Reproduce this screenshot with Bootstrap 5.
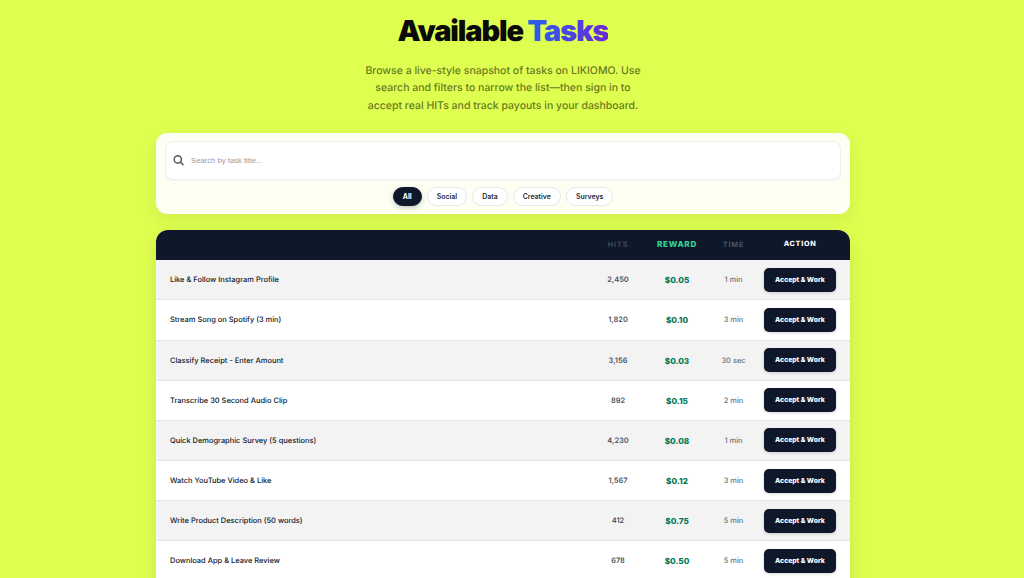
<!DOCTYPE html>
<html lang="en">
<head>
<meta charset="utf-8">
<meta name="viewport" content="width=device-width, initial-scale=1">
<title>Available Tasks</title>
<link href="https://cdn.jsdelivr.net/npm/bootstrap@5.3.0/dist/css/bootstrap.min.css" rel="stylesheet">
<style>
html, body { height: 100%; overflow: hidden; }
body { background: #deff4f; font-family: Inter, "Liberation Sans", sans-serif; color: #0f172a; padding-right: 18px; text-rendering: geometricPrecision; }
.page { width: 694px; }
.title { font-size: 29px; font-weight: 900; letter-spacing: -1.15px; line-height: 32px; color: #0a0a0a; padding-top: 15px; }
.title span { background: linear-gradient(90deg, #2563eb, #6d28d9); -webkit-background-clip: text; background-clip: text; color: transparent; }
.intro { font-size: 10.5px; font-weight: 500; line-height: 17.6px; color: #6b7a22; margin-top: 14.8px; }
.filters { height: 81px; margin-top: 18.7px; padding: 8px 9px; border-radius: 11px; background: #fdfff2; box-shadow: 0 7px 18px rgba(15,23,42,.07); }
.search { height: 39px; border: 1px solid #edeff0; border-radius: 8px; padding-left: 7px; background: #fff; box-shadow: 0 1px 1px rgba(15,23,42,.03); }
.search input { font: 7.7px "Liberation Sans", sans-serif; outline: 0; width: 300px; padding: 0 0 1px; margin-left: 7px; }
.search input::placeholder { color: #989da6; opacity: 1; }
.pills { gap: 4.8px; margin-top: 7px; }
.pill { height: 19px; border: 1px solid #e5e7eb; font-size: 6.9px; font-weight: 600; line-height: 17px; padding: 0 9.2px; background: #fff; color: #1f2937; }
.pill.active { background: #0f172a; border-color: #0f172a; color: #fff; font-weight: 700; box-shadow: 0 2px 5px rgba(15,23,42,.22); }
.listing { margin-top: 15.5px; border-radius: 12px; background: #fff; box-shadow: 0 7px 18px rgba(15,23,42,.09); }
.tasks { table-layout: fixed; width: 694px; border-collapse: separate; border-spacing: 0; white-space: nowrap; }
.tasks th, .tasks td { padding: 0; text-align: center; vertical-align: middle; }
.tasks th { height: 30.5px; background: #0f172a; font-size: 7.2px; font-weight: 800; letter-spacing: .7px; line-height: 10px; padding-bottom: 2px; }
.tasks td { height: 40.15px; border-bottom: 1px solid #e2e3e5; font-size: 7.46px; line-height: 10px; padding-top: 1px; }
.tasks tbody tr:nth-child(odd) td { background: #f3f3f3; }
.tasks td:first-child { text-align: left; padding-left: 14px; font-weight: 500; }
.tasks .hits { color: #4b5563; font-weight: 600; }
.tasks th.hits, .tasks th.time { color: #535d6b; font-weight: 600; font-size: 7.4px; letter-spacing: .85px; padding-bottom: 1px; }
.tasks th.hits { color: #434c5a; }
.tasks .reward { color: #047857; font-weight: 800; font-size: 8.2px; }
.tasks th.reward { color: #34d399; font-size: 8.1px; padding-bottom: 2px; }
.tasks .time { color: #6b7280; font-weight: 500; }
.accept { width: 72px; height: 24px; border: 0; border-radius: 5px; background: #0f172a; color: #fff; font-size: 6.8px; font-weight: 800; line-height: 24px; padding: 0; box-shadow: 0 1px 3px rgba(15,23,42,.18); display: block; margin: -1px auto 0; }
</style>
</head>
<body>
<main class="page mx-auto">
  <header class="text-center">
    <h1 class="title mb-0">Available <span>Tasks</span></h1>
    <p class="intro mb-0">Browse a live-style snapshot of tasks on LIKIOMO. Use<br>search and filters to narrow the list—then sign in to<br>accept real HITs and track payouts in your dashboard.</p>
  </header>
  <section class="filters">
    <label class="search d-flex align-items-center">
      <svg width="11" height="11" viewBox="0 0 11 11" fill="none" stroke="#4b5563" stroke-width="1.5" stroke-linecap="round" aria-hidden="true"><circle cx="4.8" cy="4.4" r="3.6"/><path d="m7.5 7.2 2.5 2.5"/></svg>
      <input class="border-0 bg-transparent" type="text" placeholder="Search by task title...">
    </label>
    <div class="pills d-flex justify-content-center">
      <button class="pill rounded-pill active">All</button>
      <button class="pill rounded-pill">Social</button>
      <button class="pill rounded-pill">Data</button>
      <button class="pill rounded-pill">Creative</button>
      <button class="pill rounded-pill">Surveys</button>
    </div>
  </section>
  <section class="listing overflow-hidden pb-4">
    <table class="tasks">
      <colgroup><col style="width:443px"><col style="width:38px"><col style="width:80px"><col style="width:33px"><col style="width:100px"></colgroup>
      <thead><tr><th></th><th class="hits">HITS</th><th class="reward">REWARD</th><th class="time">TIME</th><th class="text-white">ACTION</th></tr></thead>
      <tbody>
        <tr><td>Like &amp; Follow Instagram Profile</td><td class="hits">2,450</td><td class="reward">$0.05</td><td class="time">1 min</td><td><button class="accept">Accept &amp; Work</button></td></tr>
        <tr><td>Stream Song on Spotify (3 min)</td><td class="hits">1,820</td><td class="reward">$0.10</td><td class="time">3 min</td><td><button class="accept">Accept &amp; Work</button></td></tr>
        <tr><td>Classify Receipt - Enter Amount</td><td class="hits">3,156</td><td class="reward">$0.03</td><td class="time">30 sec</td><td><button class="accept">Accept &amp; Work</button></td></tr>
        <tr><td>Transcribe 30 Second Audio Clip</td><td class="hits">892</td><td class="reward">$0.15</td><td class="time">2 min</td><td><button class="accept">Accept &amp; Work</button></td></tr>
        <tr><td>Quick Demographic Survey (5 questions)</td><td class="hits">4,230</td><td class="reward">$0.08</td><td class="time">1 min</td><td><button class="accept">Accept &amp; Work</button></td></tr>
        <tr><td>Watch YouTube Video &amp; Like</td><td class="hits">1,567</td><td class="reward">$0.12</td><td class="time">3 min</td><td><button class="accept">Accept &amp; Work</button></td></tr>
        <tr><td>Write Product Description (50 words)</td><td class="hits">412</td><td class="reward">$0.75</td><td class="time">5 min</td><td><button class="accept">Accept &amp; Work</button></td></tr>
        <tr><td>Download App &amp; Leave Review</td><td class="hits">678</td><td class="reward">$0.50</td><td class="time">5 min</td><td><button class="accept">Accept &amp; Work</button></td></tr>
      </tbody>
    </table>
  </section>
</main>
<script src="https://cdn.jsdelivr.net/npm/bootstrap@5.3.0/dist/js/bootstrap.bundle.min.js"></script>
</body>
</html>
